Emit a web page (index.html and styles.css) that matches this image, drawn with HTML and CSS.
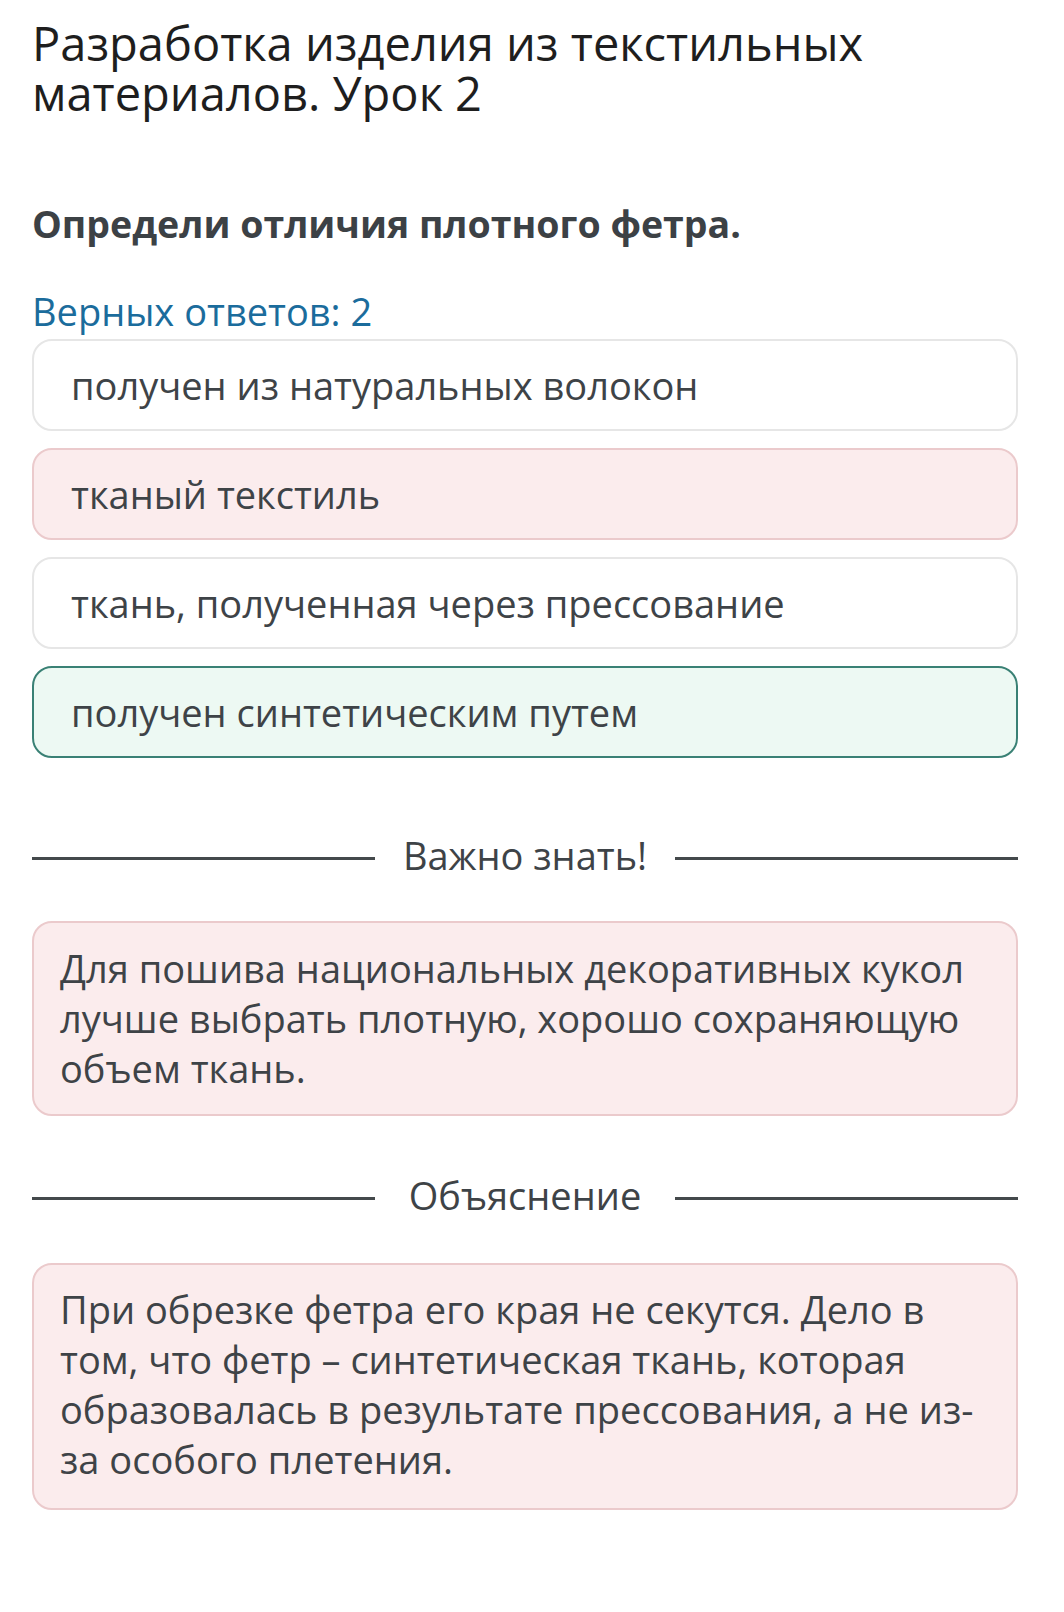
FILE: index.html
```html
<!DOCTYPE html>
<html lang="ru">
<head>
<meta charset="utf-8">
<title>Разработка изделия из текстильных материалов. Урок 2</title>
<link rel="stylesheet" href="styles.css">
</head>
<body>
<main class="page">
  <h1 class="title">Разработка изделия из текстильных материалов. Урок 2</h1>
  <h2 class="question">Определи отличия плотного фетра.</h2>
  <p class="count">Верных ответов: 2</p>
  <ul class="options">
    <li class="option">получен из натуральных волокон</li>
    <li class="option option--wrong">тканый текстиль</li>
    <li class="option">ткань, полученная через прессование</li>
    <li class="option option--right">получен синтетическим путем</li>
  </ul>
  <div class="divider divider--first"><span class="divider__line"></span><span class="divider__text">Важно знать!</span><span class="divider__line"></span></div>
  <div class="note">Для пошива национальных декоративных кукол лучше выбрать плотную, хорошо сохраняющую объем ткань.</div>
  <div class="divider"><span class="divider__line"></span><span class="divider__text">Объяснение</span><span class="divider__line"></span></div>
  <div class="note note--last">При обрезке фетра его края не секутся. Дело в том, что фетр – синтетическая ткань, которая образовалась в результате прессования, а не из-за особого плетения.</div>
</main>
</body>
</html>
```

FILE: styles.css
```css
* { box-sizing: border-box; }

html, body {
  margin: 0;
  padding: 0;
  background: #ffffff;
}

body {
  font-family: "Open Sans", "Noto Sans", sans-serif;
  color: #3e4347;
}

.page {
  padding: 18px 46px 40px 32px;
}

.title {
  margin: 0;
  font-size: 47px;
  line-height: 50px;
  font-weight: 400;
  color: #1e1e1e;
}

.question {
  margin: 81px 0 0;
  font-size: 37.5px;
  line-height: 50px;
  font-weight: 700;
  color: #3c4145;
}

.count {
  margin: 37px 0 0;
  font-size: 38px;
  line-height: 50px;
  color: #1b6c9c;
}

.options {
  list-style: none;
  margin: 3px 0 0;
  padding: 0;
  display: flex;
  flex-direction: column;
  gap: 17px;
}

.option {
  height: 92px;
  padding: 19px 20px 19px 37px;
  border: 2px solid #e6e6e6;
  border-radius: 20px;
  background: #ffffff;
  font-size: 38px;
  line-height: 50px;
  color: #3e4347;
  white-space: nowrap;
}

.option--wrong {
  background: #fbeced;
  border-color: #ebcacc;
}

.option--right {
  background: #edf9f3;
  border-color: #3a8175;
}

.divider {
  display: grid;
  grid-template-columns: 1fr 300px 1fr;
  align-items: center;
  margin-top: 54px;
}

.divider--first {
  margin-top: 72px;
}

.divider__line {
  height: 3px;
  background: #44494c;
}

.divider__text {
  text-align: center;
  font-size: 38px;
  line-height: 50px;
  color: #3e4347;
  padding-bottom: 6px;
}

.note {
  margin-top: 35px;
  padding: 20px 27px 21px 26px;
  border: 2px solid #ebcacc;
  border-radius: 20px;
  background: #fbeced;
  font-size: 38px;
  line-height: 50px;
  color: #3e4347;
}

.note--last {
  margin-top: 37px;
  padding-top: 19px;
  padding-bottom: 24px;
}
```
